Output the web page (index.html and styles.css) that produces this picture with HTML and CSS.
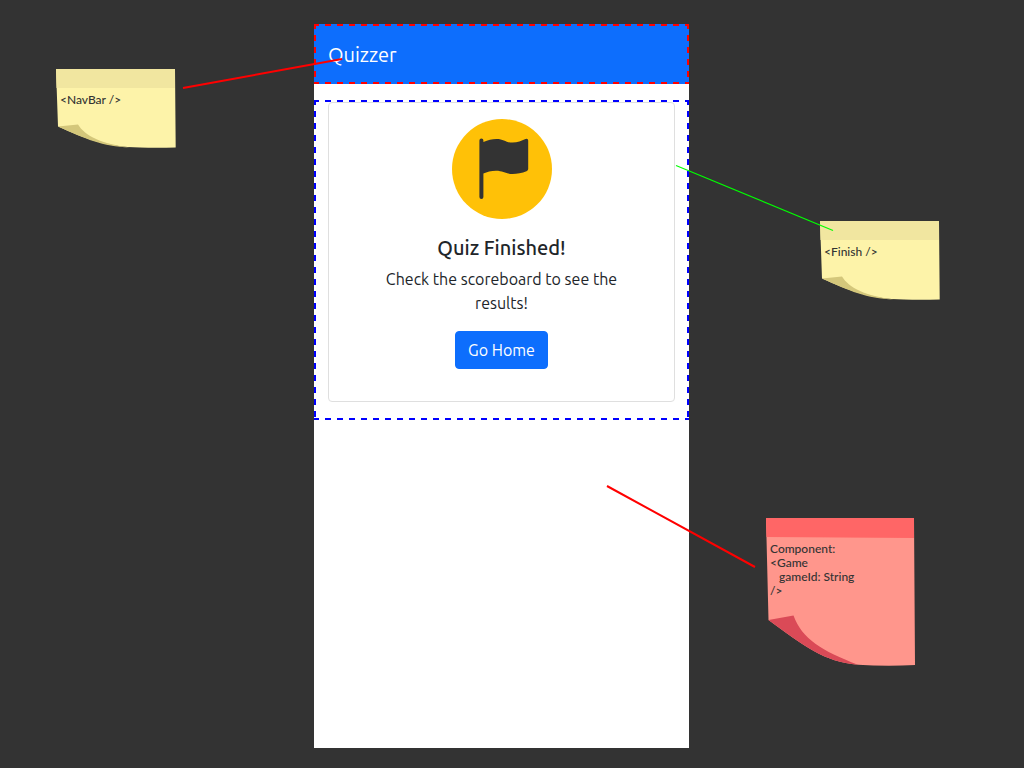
FILE: index.html
```html
<!DOCTYPE html>
<html lang="en">
<head>
<meta charset="utf-8">
<meta name="viewport" content="width=device-width, initial-scale=1">
<title>Quizzer</title>
<link rel="stylesheet" href="styles.css">
</head>
<body>
<div class="board">
  <div class="mockup">
    <div class="screen">
      <header class="navbar outlined"><a class="brand" href="#">Quizzer</a></header>
      <main class="finish outlined">
        <section class="card">
          <svg class="badge" viewBox="0 0 100 100" aria-hidden="true">
            <circle cx="50" cy="50" r="50" fill="#ffc107"/>
            <path fill="#333" d="M27.400 21.500q0-2 2-2t2 2v1.500C36 21 40 19.900 44.500 19.900C52 19.900 54 23.600 60.500 23.600C65.500 23.600 69.500 21.500 73.500 19.900Q76.200 19.200 76.200 21.500V50Q76.200 51.500 74.500 52.300C70 54.300 65 55 60.500 55C54 55 51 51.700 44 51.700C39 51.700 35 52.800 31.400 54.600V78q0 2-2 2t-2-2z"/>
          </svg>
          <h1 class="card-title">Quiz Finished!</h1>
          <p class="card-text">Check the scoreboard to see the results!</p>
          <button class="button" type="button">Go Home</button>
        </section>
      </main>
    </div>

    <aside class="note note-nav">
      <svg class="paper" viewBox="0 0 120 80" aria-hidden="true">
        <path fill="#fdf3a9" d="M0 0H119L119.700 78.500Q100 79 84 78.500C50 78 30 70 2 57.500Z"/>
        <path fill="#f1e6a0" d="M0 0H119V19H.5Z"/>
        <path fill="#d4c77b" d="M2 57.500L22 55.500C29 67 46 75 74 78.400C46 77.500 30 70 2 57.500Z"/>
      </svg>
      <p class="note-text">&lt;NavBar /&gt;</p>
    </aside>
    <aside class="note note-finish">
      <svg class="paper" viewBox="0 0 120 80" aria-hidden="true">
        <path fill="#fdf3a9" d="M0 0H119L119.700 78.500Q100 79 84 78.500C50 78 30 70 2 57.500Z"/>
        <path fill="#f1e6a0" d="M0 0H119V19H.5Z"/>
        <path fill="#d4c77b" d="M2 57.500L22 55.500C29 67 46 75 74 78.400C46 77.500 30 70 2 57.500Z"/>
      </svg>
      <p class="note-text">&lt;Finish /&gt;</p>
    </aside>
    <aside class="note note-game">
      <svg class="paper" viewBox="0 0 150 149" aria-hidden="true">
        <path fill="#ff968c" d="M0 0H148L149 147Q120 148.500 92 146.700C58 144 38 128 2.500 102Z"/>
        <path fill="#ff6666" d="M0 0H148V20L.5 19Z"/>
        <path fill="#da4a57" d="M2.500 102L27.500 97.500C36 121 56 133 92 146.700C58 144 38 128 2.500 102Z"/>
      </svg>
      <pre class="note-text">Component:
&lt;Game
   gameId: String
/&gt;</pre>
    </aside>

    <svg class="wires" viewBox="0 0 660 560" aria-hidden="true">
      <path stroke="#f00" stroke-width="2" d="M13 74L172 45M437 472L585 553"/>
      <path stroke="#0f0" stroke-width="1.200" d="M506 151.500L663 216.500"/>
    </svg>
  </div>
</div>
</body>
</html>
```
FILE: styles.css
```css
*, *::before, *::after { box-sizing: border-box; }

body {
  margin: 0;
  background: #333;
  color: #212529;
  font: 16px/24px Ubuntu, "Noto Sans", sans-serif;
}

.board {
  display: flex;
  justify-content: center;
  min-height: 100vh;
  padding: 24px 21px 20px 0;
  overflow: hidden;
}

.mockup {
  position: relative;
  display: flex;
  width: 375px;
}

.screen {
  display: flex;
  flex: 1;
  flex-direction: column;
  gap: 16px;
  background: #fff;
}

/* Dashed outline: 6px dashes with 6px gaps, 2px thick */
.outlined {
  --across: repeating-linear-gradient(90deg, var(--outline) 0 5px, transparent 5px 11px, var(--outline) 11px 12px);
  --down: repeating-linear-gradient(180deg, var(--outline) 0 5px, transparent 5px 11px, var(--outline) 11px 12px);
  background-image: var(--across), var(--across), var(--down), var(--down);
  background-position: top, bottom, left, right;
  background-size: 100% 2px, 100% 2px, 2px 100%, 2px 100%;
  background-repeat: no-repeat;
}

.navbar {
  --outline: #f00;
  padding: 16px 14px 14px;
  background-color: #0d6efd;
}

.brand {
  color: #fff;
  font-size: 20px;
  line-height: 30px;
  text-decoration: none;
}

.finish {
  --outline: #00f;
  padding: 2px 14px 18px;
}

.card {
  display: flex;
  flex-direction: column;
  align-items: center;
  padding: 16px 16px 32px;
  border: 1px solid #dfdfdf;
  border-radius: 4px;
  text-align: center;
}

.badge {
  width: 100px;
  height: 100px;
}

.card-title {
  margin: 17px 0 7px;
  font-size: 20px;
  font-weight: 500;
  line-height: 24px;
}

.card-text {
  max-width: 280px;
  margin: 0 0 16px;
}

.button {
  padding: 6px 12px;
  border: 1px solid #0d6efd;
  border-radius: 4px;
  background: #0d6efd;
  color: #fff;
  font: inherit;
}

.note {
  position: absolute;
  width: 120px;
  color: #333;
  font: 500 12px/14px Lato, "Noto Sans", sans-serif;
}

.note-nav { top: 45px; left: -258px; }
.note-finish { top: 197px; left: 506px; }
.note-game { top: 494px; left: 452px; width: 150px; }

.paper {
  display: block;
  width: 100%;
}

.note-text {
  position: absolute;
  top: 24px;
  left: 4px;
  margin: 0;
  font: inherit;
}

.wires {
  position: absolute;
  top: -10px;
  left: -144px;
  width: 660px;
  height: 560px;
  overflow: visible;
  pointer-events: none;
}
```
